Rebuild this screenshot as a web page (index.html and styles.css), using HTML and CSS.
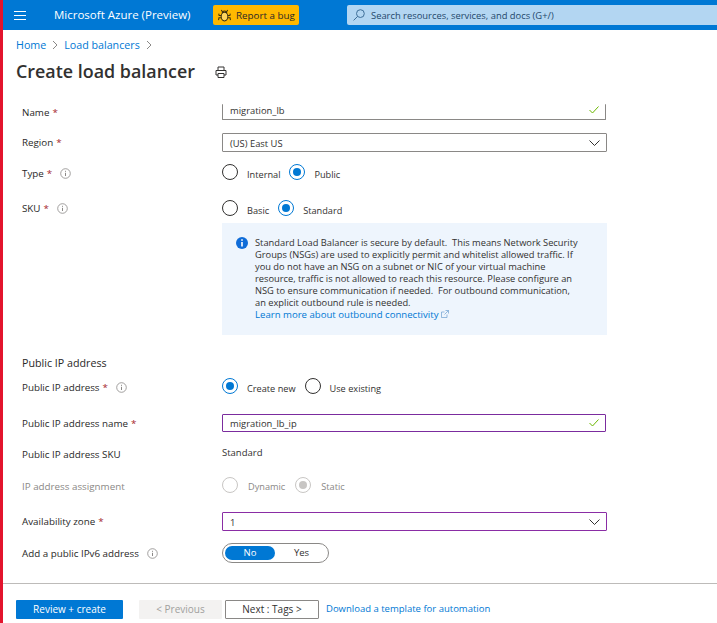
FILE: index.html
```html
<!DOCTYPE html>
<html lang="en">
<head>
<meta charset="utf-8">
<title>Create load balancer</title>
<link rel="stylesheet" href="styles.css">
</head>
<body>
<div class="page">
  <header class="topbar">
    <svg class="menu-icon" width="12" height="9" viewBox="0 0 12 9"><path d="M0 .5h12M0 4.500h12M0 8.500h12" stroke="#fff" fill="none"/></svg>
    <span class="brand">Microsoft Azure (Preview)</span>
    <button class="bug">
      <svg width="13" height="13" viewBox="0 0 14 14" fill="none" stroke="#3b2f10" stroke-width="1.1"><ellipse cx="7" cy="8.200" rx="3.600" ry="4.600" fill="#ffd45c"/><path d="M4.600 4.600a2.400 2.400 0 0 1 4.800 0M3.400 7H1.200L.8 5M10.600 7h2.200l.4-2M3.400 9.500H1L.6 12M10.600 9.500H13l.4 2.500M4.500 2.800 3.600 1M9.500 2.800l.9-1.800"/></svg>
      <span>Report a bug</span>
    </button>
    <div class="search">
      <svg width="12" height="12" viewBox="0 0 12 12" fill="none" stroke="#3f6f98"><circle cx="7.400" cy="4.600" r="3.900"/><path d="M4.600 7.400 .6 11.400"/></svg>
      <span>Search resources, services, and docs (G+/)</span>
    </div>
  </header>

  <nav class="crumbs">
    <a>Home</a>
    <svg class="crumb-sep" width="6" height="10" viewBox="0 0 6 10"><path d="M1 1l4 4-4 4" fill="none" stroke="#8a8886"/></svg>
    <a>Load balancers</a>
    <svg class="crumb-sep" width="6" height="10" viewBox="0 0 6 10"><path d="M1 1l4 4-4 4" fill="none" stroke="#8a8886"/></svg>
  </nav>

  <div class="title-row">
    <h1>Create load balancer</h1>
    <svg class="print" width="12" height="12" viewBox="0 0 12 12" fill="none" stroke="#323130"><path d="M3 4V1h6v3M3 9H1V4.500h10V9H9M3 7.500h6v4H3z"/></svg>
  </div>

  <main class="form">
    <div class="row row-name">
      <label class="lbl">Name <b>*</b></label>
      <div class="input clipped"><span class="val">migration_lb</span><svg class="check" width="10" height="8" viewBox="0 0 10 8"><path d="M.5 4l3 3 6-6.500" fill="none" stroke="#6bb700"/></svg></div>
    </div>
    <div class="row row-region">
      <label class="lbl">Region <b>*</b></label>
      <div class="input select"><span class="val">(US) East US</span><svg class="chev" width="11" height="6" viewBox="0 0 11 6"><path d="M.5.500l5 5 5-5" fill="none" stroke="#323130"/></svg></div>
    </div>
    <div class="row row-type">
      <label class="lbl">Type <b>*</b><svg class="info" width="11" height="11" viewBox="0 0 11 11"><circle cx="5.500" cy="5.500" r="4.800" fill="none" stroke="#8a8886" stroke-width=".8"/><path d="M5.500 4.800v3.200M5.500 2.800v1" stroke="#8a8886"/></svg></label>
      <div class="radios">
        <span class="radio"></span><span class="rtext">Internal</span>
        <span class="radio on"></span><span class="rtext">Public</span>
      </div>
    </div>
    <div class="row row-sku">
      <label class="lbl">SKU <b>*</b><svg class="info" width="11" height="11" viewBox="0 0 11 11"><circle cx="5.500" cy="5.500" r="4.800" fill="none" stroke="#8a8886" stroke-width=".8"/><path d="M5.500 4.800v3.200M5.500 2.800v1" stroke="#8a8886"/></svg></label>
      <div class="radios">
        <span class="radio"></span><span class="rtext">Basic</span>
        <span class="radio on"></span><span class="rtext">Standard</span>
      </div>
    </div>
    <div class="row row-note">
      <div></div>
      <div class="note">
        <svg class="note-icon" width="12" height="12" viewBox="0 0 12 12"><circle cx="6" cy="6" r="6" fill="#0f6cd8"/><path d="M6 5v4.500M6 2.300v1.500" stroke="#fff" stroke-width="1.600"/></svg>
        <p>Standard Load Balancer is secure by default.&nbsp; This means Network Security<br>Groups (NSGs) are used to explicitly permit and whitelist allowed traffic. If<br>you do not have an NSG on a subnet or NIC of your virtual machine<br>resource, traffic is not allowed to reach this resource. Please configure an<br>NSG to ensure communication if needed.&nbsp; For outbound communication,<br>an explicit outbound rule is needed.<br><a class="learn">Learn more about outbound connectivity <svg width="8" height="8" viewBox="0 0 8 8" fill="none" stroke="#6b9fd0" stroke-width=".7"><path d="M6 4.500V7.500H.5V2H3.500M4.500.500h3v3M7.500.500 3.500 4.500"/></svg></a></p>
      </div>
    </div>

    <h2>Public IP address</h2>
    <div class="row row-pip">
      <label class="lbl">Public IP address <b>*</b><svg class="info" width="11" height="11" viewBox="0 0 11 11"><circle cx="5.500" cy="5.500" r="4.800" fill="none" stroke="#8a8886" stroke-width=".8"/><path d="M5.500 4.800v3.200M5.500 2.800v1" stroke="#8a8886"/></svg></label>
      <div class="radios">
        <span class="radio on"></span><span class="rtext">Create new</span>
        <span class="radio"></span><span class="rtext">Use existing</span>
      </div>
    </div>
    <div class="row row-pipname">
      <label class="lbl">Public IP address name <b>*</b></label>
      <div class="input focus"><span class="val">migration_lb_ip</span><svg class="check" width="10" height="8" viewBox="0 0 10 8"><path d="M.5 4l3 3 6-6.500" fill="none" stroke="#6bb700"/></svg></div>
    </div>
    <div class="row row-pipsku">
      <label class="lbl">Public IP address SKU</label>
      <div class="static">Standard</div>
    </div>
    <div class="row row-assign">
      <label class="lbl muted">IP address assignment</label>
      <div class="radios disabled">
        <span class="radio"></span><span class="rtext">Dynamic</span>
        <span class="radio on"></span><span class="rtext">Static</span>
      </div>
    </div>
    <div class="row row-zone">
      <label class="lbl">Availability zone <b>*</b></label>
      <div class="input select focus wide"><span class="val">1</span><svg class="chev" width="11" height="6" viewBox="0 0 11 6"><path d="M.5.500l5 5 5-5" fill="none" stroke="#323130"/></svg></div>
    </div>
    <div class="row row-ipv6">
      <label class="lbl">Add a public IPv6 address<svg class="info" width="11" height="11" viewBox="0 0 11 11"><circle cx="5.500" cy="5.500" r="4.800" fill="none" stroke="#8a8886" stroke-width=".8"/><path d="M5.500 4.800v3.200M5.500 2.800v1" stroke="#8a8886"/></svg></label>
      <div class="toggle"><span class="opt active">No</span><span class="opt">Yes</span></div>
    </div>
  </main>

  <footer class="footer">
    <button class="btn primary">Review + create</button>
    <button class="btn prev">&lt; Previous</button>
    <button class="btn next">Next : Tags &gt;</button>
    <a class="dl">Download a template for automation</a>
  </footer>
</div>
</body>
</html>
```
FILE: styles.css
```css
* { box-sizing: border-box; }
html, body { margin: 0; height: 100%; }
body { background: #fff; color: #323130; font-family: "Open Sans", "Noto Sans", sans-serif; font-size: 9.5px; overflow: hidden; }
.page { height: 623px; border-left: 3px solid #e3142d; }
a { color: #0078d4; }

.topbar { height: 30px; background: #0078d4; display: flex; align-items: center; padding-left: 11px; }
.menu-icon { flex: none; }
.brand { color: #fff; font-size: 11.5px; margin-left: 28px; width: 159px; white-space: nowrap; padding-bottom: 1px; }
.bug { width: 86px; height: 20px; border: 0; border-radius: 2px; background: #ffb900; color: #292827; font: inherit; font-size: 9.8px; display: flex; align-items: center; gap: 5px; padding: 0 0 0 5px; white-space: nowrap; }
.search { flex: 1; height: 20px; margin-left: 48px; background: #b3d6f2; border-radius: 2px 0 0 2px; display: flex; align-items: center; gap: 6px; padding-left: 6px; color: #24486b; white-space: nowrap; font-size: 9.4px; }

.crumbs { height: 30px; display: flex; align-items: center; padding-left: 13px; font-size: 10.7px; gap: 6px; }
.crumb-sep { flex: none; }

.title-row { height: 24px; display: flex; align-items: center; padding-left: 13px; }
h1 { margin: -2px 0 0; font-size: 17.9px; font-weight: 600; width: 198px; white-space: nowrap; color: #323130; }
.print { flex: none; margin-left: 1px; }

.form { padding-left: 19px; margin-top: 20px; }
.row { display: grid; grid-template-columns: 200px 385px; align-items: center; }
.lbl { display: flex; align-items: center; gap: 3px; white-space: nowrap; color: #292827; font-size: 9.8px; }
.lbl b { color: #a4262c; font-weight: 400; }
.info { margin-left: 5px; flex: none; }
.muted { color: #8a8886; }

.input { height: 100%; border: 1px solid #8a8886; border-radius: 1px; display: flex; align-items: center; justify-content: space-between; padding: 0 6px 0 7px; white-space: nowrap; color: #323130; }
.val { font-size: 9.4px; }
.input.clipped { border-top: 0; width: 384px; }
.input.clipped .val { margin-top: -3px; }
.input.clipped .check { margin-top: -3px; }
.input.focus { border: 1px solid #7b2c9e; width: 384px; }
.input.focus.wide, .input.select { width: 385px; }
.input.select .val { margin-top: 2px; }
.input.focus.wide { border-color: #8a2da5; }

.row-name { height: 16px; }
.row-region { height: 19px; margin-top: 13px; }
.row-type { height: 19px; margin-top: 12px; }
.row-sku { height: 19px; margin-top: 17px; }
.row-sku .lbl { margin-top: -2px; }
.row-note { margin-top: 4px; }
.row-pip { height: 19px; margin-top: 6px; }
.row-pipname { height: 18px; margin-top: 17px; }
.row-pipsku { height: 18px; margin-top: 13px; }
.row-assign { height: 19px; margin-top: 14px; }
.row-zone { height: 19px; margin-top: 16px; }
.row-ipv6 { height: 20px; margin-top: 12px; }

.radios { display: flex; align-items: center; gap: 9px; font-size: 9.2px; }
.radio { width: 16px; height: 16px; border: 1.3px solid #323130; border-radius: 50%; flex: none; margin-top: -3px; display: flex; align-items: center; justify-content: center; }
.radio.on { border-color: #0078d4; }
.radio.on::after { content: ""; width: 8px; height: 8px; border-radius: 50%; background: #0078d4; }
.rtext { white-space: nowrap; color: #323130; padding-top: 1px; }
.disabled { margin-top: -1px; gap: 10px; }
.disabled .radio { border-color: #c8c6c4; }
.disabled .radio.on::after { background: #c8c6c4; }
.disabled .rtext { color: #8a8886; }
.static { margin-top: -3px; }

.note { height: 112px; background: #eef5fd; display: flex; padding: 14px 0 0 14px; gap: 7px; }
.note-icon { flex: none; }
.note p { margin: 0; line-height: 12px; font-size: 9.3px; white-space: nowrap; color: #323130; }
.learn { font-size: 9.6px; color: #0078d4; }

h2 { margin: 19px 0 0; height: 18px; line-height: 18px; font-size: 10.7px; font-weight: 400; color: #292827; }

.toggle { width: 107px; height: 20px; border: 1px solid #8a8886; border-radius: 10px; display: flex; align-items: center; padding-left: 2px; }
.opt { width: 50px; height: 14px; line-height: 14px; text-align: center; border-radius: 7px; }
.opt.active { background: #0078d4; color: #fff; }
.opt:last-child { width: 53px; }

.footer { margin-top: 20px; border-top: 1px solid #bdbbb9; padding: 16px 0 0 13px; display: flex; align-items: flex-start; white-space: nowrap; }
.btn { height: 19px; font: inherit; font-size: 10px; border-radius: 1px; padding: 0 0 2px; }
.primary { width: 107px; background: #0078d4; border: 0; color: #fff; }
.prev { width: 83px; margin-left: 16px; background: #f3f2f1; border: 0; color: #a19f9d; }
.next { width: 94px; margin-left: 3px; background: #fff; border: 1px solid #8a8886; color: #323130; }
.dl { margin-left: 7px; line-height: 18px; }
```
